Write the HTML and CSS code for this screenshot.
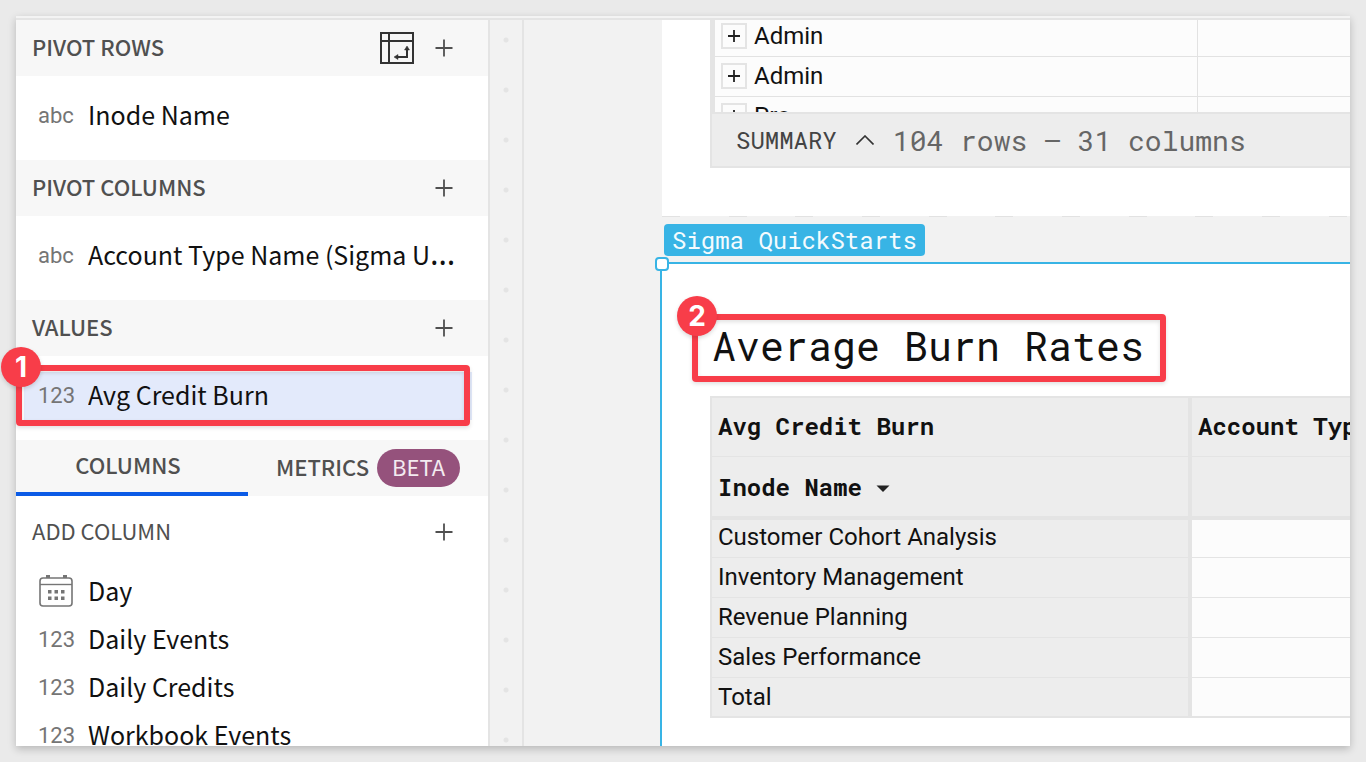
FILE: index.html
```html
<!DOCTYPE html>
<html lang="en">
<head>
<meta charset="utf-8">
<title>Average Burn Rates</title>
<link rel="stylesheet" href="styles.css">
</head>
<body>
<svg class="symbols" aria-hidden="true">
  <symbol id="plus" viewBox="0 0 18 18"><path d="M9 0.500V17.500M0.500 9H17.500" fill="none" stroke="currentColor" stroke-width="1.800"/></symbol>
  <symbol id="small-plus" viewBox="0 0 12 12"><path d="M6 0V12M0 6H12" fill="none" stroke="#222" stroke-width="1.800"/></symbol>
</svg>
<div class="stage">
  <div class="card">
    <aside class="sidebar">
      <header class="group-head">
        <h2>PIVOT ROWS</h2>
        <button class="icon-btn swap" aria-label="Swap rows and columns">
          <svg width="34" height="32" viewBox="0 0 34 32"><path d="M1 1H33V31H1ZM9 1V31M1 9H33M27 17V25H18" fill="none" stroke="#333" stroke-width="2"/><path d="M24.500 18L27 14L29.500 18ZM18 22.500L14 25L18 27.500Z" fill="#333" stroke="#333" stroke-width="0.500"/></svg>
        </button>
        <button class="icon-btn" aria-label="Add pivot row"><svg width="18" height="18"><use href="#plus"/></svg></button>
      </header>
      <ul class="group">
        <li class="field"><span class="type">abc</span><span class="name">Inode Name</span></li>
      </ul>
      <header class="group-head">
        <h2>PIVOT COLUMNS</h2>
        <button class="icon-btn" aria-label="Add pivot column"><svg width="18" height="18"><use href="#plus"/></svg></button>
      </header>
      <ul class="group">
        <li class="field"><span class="type">abc</span><span class="name">Account Type Name (Sigma U<span class="more">…</span></span></li>
      </ul>
      <header class="group-head">
        <h2>VALUES</h2>
        <button class="icon-btn" aria-label="Add value"><svg width="18" height="18"><use href="#plus"/></svg></button>
      </header>
      <ul class="group">
        <li class="field selected"><span class="type">123</span><span class="name">Avg Credit Burn</span></li>
      </ul>
      <nav class="tabs">
        <button class="tab active"><span class="tab-label">COLUMNS</span></button>
        <button class="tab"><span class="tab-label">METRICS</span><span class="beta">BETA</span></button>
      </nav>
      <header class="add-head">
        <h2>ADD COLUMN</h2>
        <button class="icon-btn" aria-label="Add column"><svg width="18" height="18"><use href="#plus"/></svg></button>
      </header>
      <ul class="columns">
        <li class="field"><span class="type"><svg width="36" height="34" viewBox="0 0 36 34"><rect x="2" y="3" width="32" height="28" rx="3" fill="none" stroke="#757575" stroke-width="1.600"/><path d="M2 9.500H34" stroke="#757575" stroke-width="1.400"/><path d="M8 0H12V3H8ZM25 0H29V3H25ZM10 15H13.500V18.500H10ZM16.500 15H20V18.500H16.500ZM23 15H26.500V18.500H23ZM10 21.500H13.500V25H10ZM16.500 21.500H20V25H16.500ZM23 21.500H26.500V25H23Z" fill="#757575"/></svg></span><span class="name">Day</span></li>
        <li class="field"><span class="type">123</span><span class="name">Daily Events</span></li>
        <li class="field"><span class="type">123</span><span class="name">Daily Credits</span></li>
        <li class="field"><span class="type">123</span><span class="name">Workbook Events</span></li>
      </ul>
    </aside>
    <div class="gutter"></div>
    <main class="canvas">
      <section class="page">
        <div class="source">
          <div class="rows">
            <table>
              <colgroup><col class="source-first"><col></colgroup>
              <tr class="cut"><td><div class="cell"><button class="expand" aria-label="Expand"><svg width="12" height="12"><use href="#small-plus"/></svg></button>Admin</div></td><td></td></tr>
              <tr><td><div class="cell"><button class="expand" aria-label="Expand"><svg width="12" height="12"><use href="#small-plus"/></svg></button>Admin</div></td><td></td></tr>
              <tr><td><div class="cell"><button class="expand" aria-label="Expand"><svg width="12" height="12"><use href="#small-plus"/></svg></button>Pro</div></td><td></td></tr>
            </table>
          </div>
          <footer class="summary">
            <button class="summary-btn">SUMMARY <svg width="18" height="10" viewBox="0 0 18 10"><path d="M0.500 9.500L9 1L17.500 9.500" fill="none" stroke="#333" stroke-width="1.600"/></svg></button>
            <span class="count">104 rows — 31 columns</span>
          </footer>
        </div>
      </section>
      <div class="divider"><span class="tag">Sigma QuickStarts</span></div>
      <section class="element">
        <span class="handle"></span>
        <h1 class="title">Average Burn Rates<span class="mark title-mark"><span class="badge">2</span></span></h1>
        <table class="pivot">
          <colgroup><col class="pivot-first"><col></colgroup>
          <thead>
            <tr><th>Avg Credit Burn</th><th>Account Type Name</th></tr>
            <tr><th>Inode Name <svg class="caret" width="14" height="8" viewBox="0 0 14 8"><path d="M0.500 0.500H13.500L7 7Z" fill="#222"/></svg></th><th></th></tr>
          </thead>
          <tbody>
            <tr><th>Customer Cohort Analysis</th><td></td></tr>
            <tr><th>Inventory Management</th><td></td></tr>
            <tr><th>Revenue Planning</th><td></td></tr>
            <tr><th>Sales Performance</th><td></td></tr>
            <tr><th>Total</th><td></td></tr>
          </tbody>
        </table>
      </section>
    </main>
  </div>
  <div class="mark value-mark"><span class="badge">1</span></div>
</div>
</body>
</html>
```
FILE: styles.css
```css
* { box-sizing: border-box; }
body { margin: 0; background: #eaeaea; color: #111; font-family: "Noto Sans CJK SC", "Open Sans", sans-serif; }
h1, h2, ul { margin: 0; padding: 0; font-weight: 400; }
ul { list-style: none; }
button { margin: 0; padding: 0; border: 0; background: none; color: inherit; font: inherit; cursor: pointer; }
svg { display: block; flex: none; }
.symbols { position: absolute; width: 0; height: 0; }

.stage { position: relative; height: 100vh; padding: 16px; }
.card {
  display: flex; height: 100%; overflow: hidden; background: #fff;
  border-top: 2px solid #f3f3f3; box-shadow: 0 3px 8px rgba(0, 0, 0, 0.22);
}
.sidebar { flex: none; width: 474px; overflow: hidden; border-top: 2px solid #e4e4e4; border-right: 2px solid #e4e4e4; }

.group-head, .add-head { display: flex; align-items: center; height: 56px; padding: 0 28px 0 16px; background: #f7f7f7; color: #505050; }
.group-head h2, .add-head h2 { flex: 1; padding-bottom: 4px; font-size: 22px; line-height: 32px; }
.group-head h2 { font-weight: 500; }
.add-head { height: 72px; background: none; }
.icon-btn { display: grid; place-items: center; width: 32px; height: 32px; }
.swap { width: 34px; margin-right: 14px; }
.group { padding: 16px 16px 20px 8px; }
.columns { padding: 0 16px 0 8px; }
.field { display: flex; align-items: center; height: 48px; padding: 0 14px; font-size: 25px; line-height: 36px; }
.selected { background: #e3eafb; }
.type { flex: none; width: 50px; color: #757575; font-family: Roboto, sans-serif; font-size: 22px; }
.name { padding-bottom: 4px; overflow: hidden; white-space: nowrap; }
.more { font-family: "Noto Sans", sans-serif; font-size: 32px; line-height: 24px; }

.tabs { display: flex; height: 56px; background: #f7f7f7; color: #505050; font-size: 22px; font-weight: 500; line-height: 32px; }
.tab { display: flex; align-items: center; justify-content: center; gap: 8px; width: 240px; }
.tab-label { padding-bottom: 4px; }
.active { width: 232px; padding-right: 8px; border-bottom: 4px solid #0b5be6; }
.beta { padding: 1px 15px 5px; border-radius: 19px; background: #95527c; color: #f3eaf0; font-weight: 400; }

.gutter {
  flex: none; width: 34px; border-top: 2px solid #e4e4e4; border-right: 2px solid #e4e4e4;
  background: radial-gradient(circle at 16px 20px, #e4e4e4 2px, transparent 3px) 0 0 / 32px 50px #f2f2f2;
}
.canvas { display: flex; flex: 1; flex-direction: column; min-width: 0; border-top: 2px solid #e4e4e4; background: #f2f2f2; }
.page { margin-left: 138px; padding: 0 0 48px 48px; background: #fff; }
.rows { height: 92px; overflow: hidden; border-left: 5px solid #e4e4e4; }
table { width: 100%; table-layout: fixed; border-collapse: separate; border-spacing: 0; font-family: Roboto, sans-serif; font-size: 24px; line-height: 32px; }
th, td { overflow: hidden; padding: 0; text-align: left; white-space: nowrap; }
.source-first { width: 483px; }
.source td { height: 40px; padding-bottom: 4px; vertical-align: bottom; border-right: 1px solid #e2e2e2; border-bottom: 1px solid #e2e2e2; background: #fcfcfc; }
.source td:last-child { border-right: 0; }
.source .cut td { height: 37px; }
.cell { display: flex; align-items: center; gap: 7px; padding-left: 6px; }
.expand { display: grid; place-items: center; width: 26px; height: 26px; border: 2px solid #e4e4e4; }
.summary {
  display: flex; align-items: center; gap: 19px; height: 56px; padding-left: 24px;
  border: 2px solid #e4e4e4; border-right: 0; background: #ededed; color: #666;
  font-family: "Roboto Mono", "Liberation Mono", monospace; font-size: 28px; line-height: 36px; white-space: nowrap;
}
.summary-btn { display: flex; align-items: center; gap: 19px; color: #444; font-size: 24px; }
.count { padding-top: 2px; }

.divider {
  display: flex; height: 46px; margin-left: 138px; padding: 8px 2px 6px;
  background: repeating-linear-gradient(90deg, #e2e2e2 0 18px, transparent 18px calc(200px / 3)) 0 0 / 100% 1px no-repeat;
}
.tag { padding: 0 8px; border-radius: 4px; background: #38b4e5; color: #f4fbfe; font-family: "Roboto Mono", "Liberation Mono", monospace; font-size: 24px; line-height: 32px; }

.element { position: relative; flex: 1; margin-left: 136px; padding: 56px 0 0 48px; border-top: 2px solid #38b4e5; border-left: 2px solid #38b4e5; background: #fff; }
.handle { position: absolute; top: -7px; left: -7px; width: 14px; height: 14px; border: 2px solid #38b4e5; border-radius: 4px; background: #fff; }
.title { position: relative; width: max-content; height: 76px; padding: 2px; font-family: "Roboto Mono", "Liberation Mono", monospace; font-size: 40px; line-height: 48px; }
.pivot { border-top: 2px solid #e4e4e4; border-left: 2px solid #e4e4e4; }
.pivot-first { width: 480px; }
.pivot th, .pivot td { height: 40px; padding: 0 0 4px 6px; border-bottom: 1px solid #e4e4e4; background: #ededed; font-weight: 400; vertical-align: bottom; }
.pivot tr > :first-child { border-right: 4px solid #e4e4e4; }
.pivot tbody td { background: #fcfcfc; }
.pivot thead th { height: 59px; padding-bottom: 2px; font-family: "Roboto Mono", "Liberation Mono", monospace; font-weight: 700; vertical-align: middle; }
.pivot thead tr:last-child th { height: 63px; padding-bottom: 0; border-bottom-width: 4px; }
.pivot tbody tr:first-child > * { height: 38px; }
.pivot tbody tr:last-child > * { padding-bottom: 3px; border-bottom-width: 2px; }
.caret { display: inline-block; margin-bottom: 3px; }

.mark { position: absolute; border: 6px solid #f83d49; border-radius: 4px; box-shadow: 0 2px 4px rgba(0, 0, 0, 0.12), inset 0 2px 4px rgba(0, 0, 0, 0.12); pointer-events: none; }
.title-mark { top: -6px; right: -20px; bottom: 14px; left: -18px; }
.value-mark { top: 365px; left: 16px; width: 454px; height: 61px; }
.badge {
  position: absolute; top: -24px; left: -21px; width: 40px; height: 40px; border-radius: 50%;
  background: #f83d49; box-shadow: 0 2px 4px rgba(0, 0, 0, 0.15); color: #fff;
  font-family: Inter, sans-serif; font-size: 28px; font-weight: 700; line-height: 40px; text-align: center;
}
```
